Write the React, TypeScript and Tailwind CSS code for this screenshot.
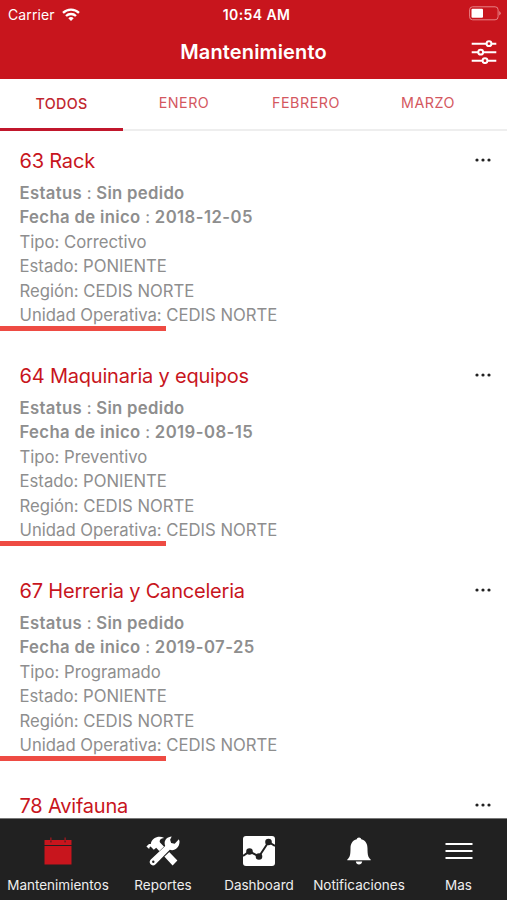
import type { ReactNode } from "react";

type Item = {
  id: number;
  name: string;
  date?: string;
  type?: string;
};

const tabs = ["TODOS", "ENERO", "FEBRERO", "MARZO"];

const items: Item[] = [
  { id: 63, name: "Rack", date: "2018-12-05", type: "Correctivo" },
  { id: 64, name: "Maquinaria y equipos", date: "2019-08-15", type: "Preventivo" },
  { id: 67, name: "Herreria y Canceleria", date: "2019-07-25", type: "Programado" },
  { id: 78, name: "Avifauna" },
];

function StatusBar() {
  return (
    <div className="grid h-7 grid-cols-3 items-center pl-2 pr-[6px] text-[14px]">
      <div className="flex items-center gap-[7px]">
        <span className="tracking-[0.1px]">Carrier</span>
        <svg width="18" height="13" viewBox="0 0 18 13" fill="none" stroke="white" strokeWidth="2.3">
          <path d="M1 4.9a11.4 11.4 0 0 1 16 0" />
          <path d="M4 8a7.2 7.2 0 0 1 10 0" />
          <path d="M6.3 10.2a3.9 3.9 0 0 1 5.4 0L9 13z" fill="white" stroke="none" />
        </svg>
      </div>
      <span className="whitespace-nowrap pl-1 text-center font-semibold tracking-[0.4px]">10:54 AM</span>
      <svg className="-mt-px justify-self-end" width="32" height="15" viewBox="0 0 32 15">
        <rect x="0.6" y="0.8" width="28.5" height="13" rx="3" fill="none" stroke="#e78286" />
        <rect x="2.5" y="2.8" width="11.5" height="9" rx="1" fill="white" />
        <path d="M30.2 5v4.5q1.5-.8 1.5-2.2T30.2 5z" fill="#e78286" />
      </svg>
    </div>
  );
}

function Header() {
  return (
    <header className="h-[79px] shrink-0 bg-[#c8151d] text-white">
      <StatusBar />
      <div className="grid h-12 grid-cols-[1fr_auto_1fr] items-center">
        <h1 className="col-start-2 text-[20px] font-semibold tracking-[0.15px]">Mantenimiento</h1>
        <svg className="mr-[10px] justify-self-end" width="26" height="24" viewBox="0 0 26 24" fill="#c8151d" stroke="white" strokeWidth="2">
          <path d="M.7 3.7h24.6M.7 12.2h24.6M.7 20.7h24.6" />
          <circle cx="18" cy="3.7" r="2.4" />
          <circle cx="9.7" cy="12.2" r="2.4" />
          <circle cx="14" cy="20.7" r="2.4" />
        </svg>
      </div>
    </header>
  );
}

function Card({ item }: { item: Item }) {
  return (
    <article className="h-[215px] shrink-0 pt-4">
      <div className="flex h-7 items-center justify-between pl-[19.5px] pr-4">
        <h2 className="text-[20px] tracking-[-0.2px] text-[#c8151d]">
          {item.id} {item.name}
        </h2>
        <svg className="-mt-0.5" width="16" height="4" viewBox="0 0 16 4" fill="#222">
          <circle cx="2" cy="2" r="1.6" />
          <circle cx="8" cy="2" r="1.6" />
          <circle cx="14" cy="2" r="1.6" />
        </svg>
      </div>
      {item.date && (
        <>
          <div className="mt-1.5 pl-[19.5px] text-[16.7px] leading-[24.4px] text-[#8e8e8e]">
            <p>
              <b className="font-semibold tracking-[0.35px]">Estatus</b> :{" "}
              <b className="font-semibold tracking-[0.3px]">Sin pedido</b>
            </p>
            <p>
              <b className="font-semibold tracking-[0.35px]">Fecha de inico</b> :{" "}
              <b className="font-semibold tracking-[0.45px]">{item.date}</b>
            </p>
            <p>Tipo: {item.type}</p>
            <p>Estado: PONIENTE</p>
            <p>Región: CEDIS NORTE</p>
            <p>Unidad Operativa: CEDIS NORTE</p>
          </div>
          <div className="-mt-px h-[5px] w-[166px] bg-[#ee4b43]" />
        </>
      )}
    </article>
  );
}

function NavItem({ label, width, children }: { label: string; width: string; children: ReactNode }) {
  return (
    <div className={`flex flex-col items-center ${width}`}>
      <div className="flex h-[58px] items-center pt-[5px]">{children}</div>
      <span className="whitespace-nowrap text-[13.5px] leading-4">{label}</span>
    </div>
  );
}

function BottomNav() {
  return (
    <nav className="flex h-[82px] shrink-0 border-t border-[#777] bg-[#212121] text-[#eee]">
      <NavItem label="Mantenimientos" width="w-[116px]">
        <svg width="28" height="28" viewBox="0 0 28 28" fill="#c8151d">
          <path d="M.5 3h5.7v2.2h1.4V3h12.8v2.2h1.4V3h5.7v5H.5zM.5 9h27v18.5H.5zM6.4.6h1v3.8h-1zM20.6.6h1v3.8h-1z" />
        </svg>
      </NavItem>
      <NavItem label="Reportes" width="w-[94px]">
        <svg width="34" height="30" viewBox="0 0 34 30">
          {/* hammer */}
          <path
            d="M.4 10.4 3 8l1.8.1C5 5.8 6 4 8 2.5 11 .3 15 .2 18.2 1.9c-3.6.3-5.2 2.2-4.2 4.7l17.4 18-4.8 5L10.2 11.8l-2.4 2-3.2-3.2c-.8.1-1.2 1-1.4 2.4z"
            fill="white"
          />
          {/* wrench, with a dark edge where it crosses the hammer */}
          <path d="M21 13 9 24.2" fill="none" stroke="#212121" strokeWidth="7.6" />
          <path
            d="M25.7.6c-5.3.3-8.4 4.8-6.5 9.3L4.8 23.5c-3.3 3.4 1.3 8.2 4.8 4.8l14.2-14.5c5 1.6 10-2.4 9.7-8.6l-.6-1.9-4.2 4.5-3.6-.8-1-3.3z"
            fill="white"
          />
          <circle cx="7.3" cy="25.8" r="1.2" fill="#212121" />
        </svg>
      </NavItem>
      <NavItem label="Dashboard" width="w-[98px]">
        <svg width="32" height="30" viewBox="0 0 32 30">
          <rect width="32" height="30" rx="3" fill="white" />
          <g fill="#212121" stroke="#212121" strokeWidth="2">
            <path d="m0 20 6.5-4.5 9.5 5L25.5 6 32 10" fill="none" />
            <circle cx="6.5" cy="15.5" r="2.3" />
            <circle cx="16" cy="20.5" r="2.3" />
            <circle cx="25.5" cy="6" r="2.3" />
          </g>
        </svg>
      </NavItem>
      <NavItem label="Notificaciones" width="w-[102px]">
        <svg width="24" height="28" viewBox="0 0 24 28" fill="white">
          <path d="M12 .5c1.3 0 2 .8 2.2 1.8 4.7 1.2 6.3 5 6.3 9.1 0 6.8.8 8.9 3.2 11v.8H.3v-.8c2.4-2.1 3.2-4.2 3.2-11 0-4.1 1.6-7.9 6.3-9.1C10 1.3 10.7.5 12 .5zM8.8 24.4h6.4c-.3 1.9-1.5 3-3.2 3s-2.9-1.1-3.2-3z" />
        </svg>
      </NavItem>
      <NavItem label="Mas" width="w-[97px]">
        <svg width="28" height="18" viewBox="0 0 28 18" stroke="white" strokeWidth="2">
          <path d="M.5 2h27M.5 9h27M.5 16h27" />
        </svg>
      </NavItem>
    </nav>
  );
}

export default function App() {
  return (
    <div className="flex h-[900px] w-[507px] flex-col overflow-hidden bg-white font-['Inter',sans-serif]">
      <Header />
      <div className="flex h-[52px] shrink-0 border-b-2 border-[#eeeeee]">
        {tabs.map((tab, i) => (
          <div
            key={tab}
            className={
              i === 0
                ? "-mb-0.5 flex w-[123px] items-center justify-center border-b-3 border-[#c1172c] text-[14.3px] font-medium tracking-[0.3px] text-[#c1272f]"
                : "flex w-[122px] items-center justify-center pb-0.5 text-[14.3px] tracking-[0.5px] text-[#d4585f]"
            }
          >
            {tab}
          </div>
        ))}
      </div>
      <main className="flex min-h-0 flex-1 flex-col overflow-hidden">
        {items.map((item) => (
          <Card key={item.id} item={item} />
        ))}
      </main>
      <BottomNav />
    </div>
  );
}
